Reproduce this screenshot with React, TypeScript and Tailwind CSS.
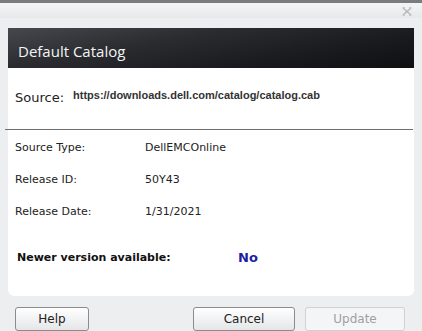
import React from "react";

export default function App() {
  const verdana = { fontFamily: '"DejaVu Sans", Verdana, sans-serif' };
  return (
    <div className="w-[422px] h-[331px] overflow-hidden bg-[#eceef0] flex flex-col" style={verdana}>
      <div className="h-[3px] bg-[#7a7c7e]" />
      <div className="h-[15px] bg-gradient-to-b from-[#f4f5f6] to-[#e6e8ea] flex justify-end items-center pr-[10px]">
        <svg width="10" height="9" viewBox="0 0 10 9" className="mt-[2px]">
          <path d="M1 1 L9 8 M9 1 L1 8" stroke="#b4b6b8" strokeWidth="1.4" fill="none" />
          <path d="M0.5 0.5 H3 M7 0.5 H9.5 M0.5 8.5 H3 M7 8.5 H9.5" stroke="#c8cacc" strokeWidth="1" fill="none" />
        </svg>
      </div>
      <div className="flex-1 flex flex-col px-[8px] pt-[10px]">
        <div className="h-[40px] bg-[linear-gradient(170deg,#45484d_0%,#2a2c30_35%,#1a1b1e_70%,#0e0f11_100%)] flex items-center pl-[10px] pt-[6px]">
          <span className="text-[#f4f4f4] text-[15px]" style={{ fontFamily: '"Open Sans", "Noto Sans", sans-serif' }}>Default Catalog</span>
        </div>
        <div className="h-[228px] bg-white rounded-b-[6px] flex flex-col">
          <div className="h-[61px] flex items-center pl-[7px] pb-[2px]">
            <span className="text-[13px] text-[#222] w-[58px]">Source:</span>
            <span className="text-[11px] font-bold text-[#333] -mt-[4px]" style={{ fontFamily: '"Liberation Sans", Arial, sans-serif' }}>
              https://downloads.dell.com/catalog/catalog.cab
            </span>
          </div>
          <div className="h-px bg-[#6e6e6e] -ml-[3px] mr-[1px]" />
          <div className="flex flex-col pl-[7px] pt-[10px] text-[11px] text-[#222]">
            <div className="flex h-[32px] items-start"><span className="w-[130px]">Source Type:</span><span>DellEMCOnline</span></div>
            <div className="flex h-[32px] items-start"><span className="w-[130px]">Release ID:</span><span>50Y43</span></div>
            <div className="flex h-[32px] items-start"><span className="w-[130px]">Release Date:</span><span>1/31/2021</span></div>
            <div className="flex items-center mt-[12px] pl-[2px]">
              <span className="w-[221px] font-bold text-[#111]">Newer version available:</span>
              <span className="font-bold text-[13px] text-[#1d1fa0]">No</span>
            </div>
          </div>
        </div>
        <div className="flex items-start mt-[11px] text-[12px]">
          <button className="ml-[7px] w-[74px] h-[24px] rounded-[3px] border border-[#8a8d90] bg-gradient-to-b from-[#ffffff] to-[#e4e6e8] text-[#222]">Help</button>
          <button className="ml-[104px] w-[102px] h-[24px] rounded-[3px] border border-[#8a8d90] bg-gradient-to-b from-[#ffffff] to-[#e4e6e8] text-[#222]">Cancel</button>
          <button className="ml-[10px] w-[100px] h-[24px] rounded-[3px] border border-[#cfd2d5] bg-[#f4f5f6] text-[#a0a0a0]">Update</button>
        </div>
      </div>
    </div>
  );
}
